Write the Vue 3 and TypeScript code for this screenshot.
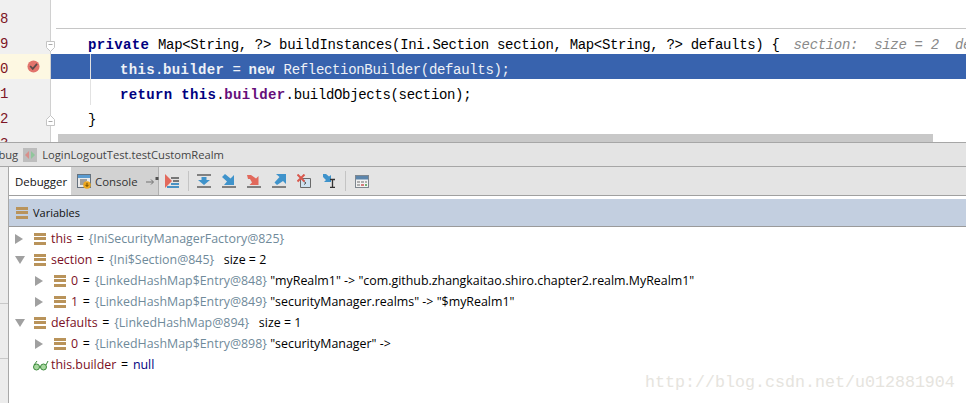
<script setup lang="ts">
interface Row { id: number; depth: number; open: boolean | null; name: string; obj: string; rest: string; watch?: boolean }
const hint = 'section:  size = 2  de'
const rows: Row[] = [
  { id: 1, depth: 0, open: false, name: 'this', obj: '{IniSecurityManagerFactory@825}', rest: '' },
  { id: 2, depth: 0, open: true, name: 'section', obj: '{Ini$Section@845}', rest: '  size = 2' },
  { id: 3, depth: 1, open: false, name: '0', obj: '{LinkedHashMap$Entry@848}', rest: '"myRealm1" -> "com.github.zhangkaitao.shiro.chapter2.realm.MyRealm1"' },
  { id: 4, depth: 1, open: false, name: '1', obj: '{LinkedHashMap$Entry@849}', rest: '"securityManager.realms" -> "$myRealm1"' },
  { id: 5, depth: 0, open: true, name: 'defaults', obj: '{LinkedHashMap@894}', rest: '  size = 1' },
  { id: 6, depth: 1, open: false, name: '0', obj: '{LinkedHashMap$Entry@898}', rest: '"securityManager" ->' },
  { id: 7, depth: 0, open: null, name: 'this.builder', obj: '', rest: 'null', watch: true }
]
</script>

<template>
  <div class="page">
    <section class="editor">
      <div class="gutter">
        <div class="num">8</div>
        <div class="num">9</div>
        <div class="num current">0
          <svg class="bp" width="13" height="13" viewBox="0 0 14 14"><circle cx="7" cy="7" r="6.500" fill="#e2746c" /><path d="M3.400 6.400 6.200 9.600 10.800 4.200" fill="none" stroke="#5a4a4a" stroke-width="1.800" /></svg>
        </div>
        <div class="num">1</div>
        <div class="num">2</div>
        <div class="num cut">3</div>
        <svg class="fold fold-a" width="9" height="11" viewBox="0 0 9 11"><path d="M.5.5h8v6L4.5 10.500.5 6.500z" fill="#fff" stroke="#c4c4c4" /><path d="M2.500 3.500h4" stroke="#aaa" /></svg>
        <svg class="fold fold-b" width="9" height="11" viewBox="0 0 9 11"><path d="M.5 10.500h8v-6L4.500.5.5 4.500z" fill="#fff" stroke="#c4c4c4" /><path d="M2.500 6.500h4" stroke="#aaa" /></svg>
      </div>
      <div class="code">
        <div class="line"></div>
        <div class="line sep"><b class="kw">private </b>Map&lt;String, ?&gt; buildInstances(Ini.Section section, Map&lt;String, ?&gt; defaults) {<i class="hint">{{ hint }}</i></div>
        <div class="line active"><span class="ind2"><b>this</b>.<b>builder</b> = <b>new </b>ReflectionBuilder(defaults);</span></div>
        <div class="line"><span class="ind2"><b class="kw">return this</b>.<b class="field">builder</b>.buildObjects(section);</span></div>
        <div class="line">}</div>
        <div class="guide"></div>
        <div class="scroll"></div>
      </div>
    </section>

    <section class="debug">
      <header class="title">
        <span class="label clip">Debug</span>
        <svg class="run" width="14" height="14" viewBox="0 0 14 14"><rect width="14" height="14" fill="#bdbdbd" /><path d="M2 7l4-4v8z" fill="#d98f8a" /><path d="M12 7 8 3v8z" fill="#8fc79b" /></svg>
        <span class="label">LoginLogoutTest.testCustomRealm</span>
      </header>
      <div class="body">
        <div class="strip"><i class="tick t1"></i><i class="tick t2"></i></div>
        <div class="main">
          <nav class="tools">
            <div class="tab on">Debugger</div>
            <div class="tab">
              <svg width="14" height="15" viewBox="0 0 14 15"><rect x=".5" y=".5" width="13" height="13" fill="#eaeaea" stroke="#66727e" /><rect x="1" y="1" width="12" height="3" fill="#5a9bd0" /><path d="M3 6h7M3 8h6M3 10h4" stroke="#555" /><circle cx="10" cy="11" r="3.800" fill="#eea820" /><path d="M10 8.800v3.500M8.400 10.800l1.600 1.700 1.600-1.700" stroke="#6b4a00" fill="none" /></svg>
              <span>Console</span>
              <svg class="pin" width="13" height="10" viewBox="0 0 13 10"><path d="M0 6h7M5 3.500 7.500 6 5 8.500" fill="none" stroke="#707070" /><rect x="9.500" y="1" width="3" height="3" fill="#505050" /></svg>
            </div>
            <div class="btns">
              <svg width="14" height="14" viewBox="0 0 14 14"><path d="M0 0v14l7-7z" fill="#e2695c" /><path d="M6 3h8v2H6zM8 6h6v2H8z" fill="#777" /><path d="M6 9h8v2H6zM2 12h12v2H2z" fill="#4a92c4" /></svg>
              <i class="bar b1"></i>
              <svg width="14" height="14" viewBox="0 0 14 14"><path d="M0 0h14v2H0zM0 12h14v2H0z" fill="#808080" /><path d="M4.500 3h5v3H13l-6 5-6-5h3.500z" fill="#3f93cb" /></svg>
              <svg width="14" height="14" viewBox="0 0 14 14"><path d="M0 12h14v2H0z" fill="#808080" /><path d="M3 0 0 3l5 4.500L2 11h10V1L8.500 4.500z" fill="#3f93cb" /></svg>
              <svg width="14" height="14" viewBox="0 0 14 14"><path d="M0 12h14v2H0z" fill="#808080" /><path d="M0 1h4l5 3.500L11.500 2v9H2.500L5 8.500 3 5H1z" fill="#e2695c" /></svg>
              <svg width="14" height="14" viewBox="0 0 14 14"><path d="M0 12h14v2H0z" fill="#808080" /><path d="M4 0h10v10l-3-3-6 4-2.500-2.500 5-5.500z" fill="#3f93cb" /></svg>
              <svg width="14" height="14" viewBox="0 0 14 14"><path d="M3.500 4.500h10v9h-10z" fill="#cfe2f0" stroke="#6a6a6a" /><path d="M7 7.500l2 1.500-2 1.500" fill="none" stroke="#555" /><path d="M.5.5l7 7M7.500.5l-7 7" stroke="#d9594e" stroke-width="2" /></svg>
              <svg width="14" height="14" viewBox="0 0 14 14"><path d="M1 0h3l3 2.500L9 1v7H2l2-2L1 3z" fill="#3f93cb" /><path d="M8 5.500h5M8 13.500h5M10.500 5.500v8" stroke="#333" stroke-width="1.300" fill="none" /></svg>
              <i class="bar b2"></i>
              <svg width="14" height="13" viewBox="0 0 14 13"><rect x=".5" y=".5" width="13" height="12" fill="#f2f2f2" stroke="#7e878f" /><rect x="1" y="1" width="12" height="3.500" fill="#5c85ab" /><path d="M2 7h3M6 7h3M10 7h2M2 10h3" stroke="#999" stroke-width="1.500" /><path d="M10 10h2" stroke="#4a9a4a" stroke-width="1.500" /><path d="M6 10h3" stroke="#c55" stroke-width="1.500" /></svg>
            </div>
          </nav>
          <div class="panel-head">
            <span class="stack"><u></u><u></u><u></u></span>
            <span>Variables</span>
          </div>
          <ul class="tree">
            <li v-for="r in rows" :key="r.id" class="row" :class="{ deep: r.depth === 1 }">
              <span class="arrow" :class="{ open: r.open === true, none: r.open === null }"></span>
              <svg v-if="r.watch" class="glasses" width="16" height="12" viewBox="0 0 16 12"><circle cx="3.500" cy="8" r="3" fill="#a8d8a0" stroke="#3c8a3c" /><circle cx="10.500" cy="8" r="3" fill="#a8d8a0" stroke="#3c8a3c" /><path d="M6.500 8h1M1 6l3-4M13 6l2-4" stroke="#3c8a3c" fill="none" /></svg>
              <span v-else class="stack"><u></u><u></u><u></u></span>
              <span class="name">{{ r.name }}</span>
              <span class="eq"> = </span>
              <span v-if="r.obj" class="obj">{{ r.obj }}</span>
              <span class="rest" :class="{ kwnull: r.watch }">{{ r.obj ? ' ' : '' }}{{ r.rest }}</span>
            </li>
          </ul>
        </div>
      </div>
      <div class="mark">http://blog.csdn.net/u012881904</div>
    </section>
  </div>
</template>

<style>
html, body { margin: 0; background: #fff; }
</style>

<style scoped>
.page { width: 966px; height: 403px; overflow: hidden; position: relative; font-family: "Open Sans", "Liberation Sans", Arial, sans-serif; }
.editor { display: flex; height: 142px; overflow: hidden; }
.gutter { width: 50px; flex: none; background: #f0f0f0; border-right: 1px solid #d0d0d0; position: relative; padding-top: 4px; }
.num { height: 25px; box-sizing: border-box; padding-top: 3px; font: 14px/25px "Liberation Mono", monospace; color: #7d1525; position: relative; }
.num.current { background: #fdf8e2; }
.num.cut { height: 13px; overflow: hidden; }
.bp { position: absolute; left: 27px; top: 6px; }
.fold { position: absolute; left: 46px; }
.fold-a { top: 41px; }
.fold-b { top: 115px; }
.code { flex: 1; min-width: 0; position: relative; padding-top: 4px; font: 14px/25px "Liberation Mono", monospace; letter-spacing: -.33px; color: #000; white-space: pre; }
.code b { letter-spacing: .35px; }
.line { height: 25px; box-sizing: border-box; padding: 4px 0 0 37px; white-space: pre; overflow: hidden; }
.sep { position: relative; overflow: visible; }
.sep::before { content: ""; position: absolute; left: 5px; right: 0; top: -1px; height: 1px; background: #c6c6c6; }
.kw { color: #000080; }
.field { color: #660e7a; }
.hint { color: #8a8a8a; margin-left: 14px; }
.active { background: #3863ae; color: #eef1f7; }
.ind2 { padding-left: 32px; }
.guide { position: absolute; left: 39px; top: 54px; width: 1px; height: 51px; background: #e2e2e2; }
.scroll { position: absolute; left: 7px; top: 134px; width: 875px; height: 8px; background: #c8c8c8; }
.debug { position: relative; }
.title { display: flex; align-items: center; gap: 7px; background: #e4e4e4; border-top: 1px solid #a6a6a6; color: #444; font-size: 11.2px; height: 23px; }
.label { white-space: pre; }
.clip { margin-left: -16px; margin-right: -2px; }
.run { margin-right: -2px; }
.body { display: flex; border-top: 1px solid #a6a6a6; }
.strip { width: 8px; flex: none; background: #ececec; border-right: 1px solid #a8a8a8; height: 240px; position: relative; }
.tick { position: absolute; left: 0; right: 0; height: 1px; background: #c8c8c8; }
.t1 { top: 136px; }
.t2 { top: 191px; }
.main { flex: 1; min-width: 0; }
.tools { display: flex; height: 28px; background: #e4e4e4; border-bottom: 1px solid #a0a0a0; font-size: 11.4px; color: #111; }
.tab { display: flex; align-items: center; width: 88px; box-sizing: border-box; padding-left: 6px; background: #d2d2d2; border-right: 1px solid #b0b0b0; color: #333; }
.tab svg { flex: none; }
.tab span { margin-left: 4px; }
.tab.on { background: #fff; color: #111; width: 62px; border-right: 0; }
.pin { margin-left: 8px; }
.btns { display: flex; align-items: center; gap: 11px; padding-left: 6px; }
.bar { width: 1px; height: 20px; background: #c4c4c4; }
.b1 { margin: 0 -3px 0 -2px; }
.b2 { margin: 0 -2px; }
.panel-head { height: 27px; margin-top: 3px; display: flex; align-items: center; gap: 5px; background: #c3cfe0; border-bottom: 1px solid #9a9a9a; padding-left: 7px; font-size: 11px; color: #111; }
.stack { display: inline-flex; flex-direction: column; justify-content: space-between; width: 12px; height: 12px; flex: none; }
.stack u { display: block; height: 3px; background: #b9935a; }
.tree { list-style: none; margin: 0; padding: 1px 0 0 6px; font-size: 12.4px; }
.row { height: 21px; display: flex; align-items: center; white-space: pre; color: #000; }
.deep { padding-left: 20px; }
.arrow { width: 0; height: 0; border-style: solid; border-width: 5px 0 5px 8px; border-color: transparent transparent transparent #a0a0a0; margin-right: 11px; flex: none; }
.arrow.open { border-width: 8px 5px 0; border-color: #a0a0a0 transparent transparent; margin-right: 9px; }
.arrow.none { border: 0; width: 18px; margin-right: 0; }
.stack + .name { margin-left: 5px; }
.glasses { margin-right: 2px; }
.name { color: #7b0f25; }
.eq { padding: 0 1.5px; }
.obj { color: #6f8a9a; }
.kwnull { color: #000080; }
.mark { position: absolute; left: 645px; top: 231px; font: 16.67px "Liberation Mono", monospace; color: #e6e4de; }
</style>
